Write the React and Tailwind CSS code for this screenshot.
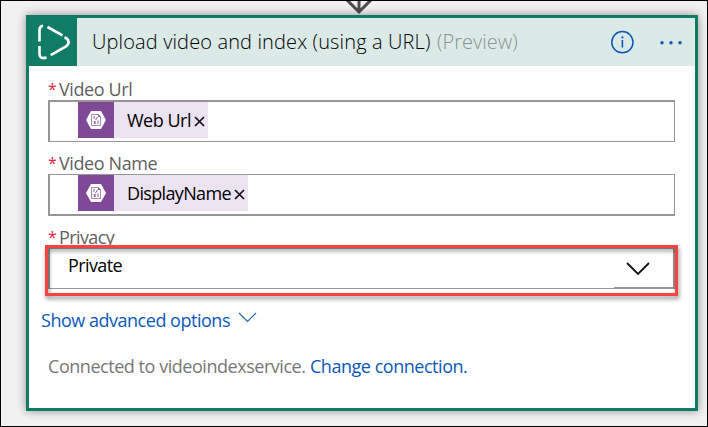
function Label({ children, className }) {
  return (
    <div className="flex h-[22px] items-center leading-[22px]">
      <span className="w-[11px] text-[16px]/[20px] text-[#e3263a]">*</span>
      <span className={`whitespace-nowrap text-[#5f5f5f] ${className}`}>{children}</span>
    </div>
  );
}

function Token({ children, className, textClass }) {
  return (
    <div className={`flex h-9 items-center bg-[#ece3f0] ${className}`}>
      <div className="flex h-9 w-9 shrink-0 items-center justify-center bg-[#804998]">
        <svg width="20" height="18" viewBox="0 0 20 18">
          <path d="M5 0H15L20 9L15 18H5L0 9Z" fill="#fff" />
          <path d="M5.5 3.5H12.5L14.5 5.5V14.5H5.5Z" fill="none" stroke="#a27bb3" strokeWidth="0.9" />
          <path d="M12 3.5V6H14.5Z" fill="#804998" />
          <path d="M8 5V8M11.5 6L9.5 9M8 10L9.5 13M9.5 10L8 13M12 9.5V13" fill="none" stroke="#804998" strokeWidth="0.9" />
        </svg>
      </div>
      <span className={`ml-[13px] whitespace-nowrap text-black ${textClass}`}>{children}</span>
      <svg className="mr-[3px] ml-auto mt-[3px] shrink-0" width="11" height="11" viewBox="0 0 11 11">
        <path d="M1 1L10 10M10 1L1 10" stroke="#111" strokeWidth="1.7" />
      </svg>
    </div>
  );
}

export default function App() {
  return (
    <div className="relative h-[427px] w-[708px] overflow-hidden border border-black bg-[#f1f1f1] pt-[14px] pl-[25px] font-['Open_Sans','Noto_Sans',sans-serif] text-[18px]">
      <svg className="absolute top-0 left-[343px]" width="30" height="14" viewBox="0 0 30 14">
        <path d="M15 0V11M1.5 -2.5L15 11L28.5 -2.5" fill="none" stroke="#4c4c4c" strokeWidth="3" />
      </svg>
      <div className="relative flex h-[396px] w-[672px] flex-col border-[3px] border-[#117c65] bg-white shadow-[0_0_9px_rgba(0,0,0,0.4)]">
        <div className="flex h-12 shrink-0 items-center bg-[#dceae7]">
          <div className="flex h-12 w-12 shrink-0 items-center justify-center bg-[#117c65]">
            <svg width="48" height="48" viewBox="29 18 48 48" fill="none" stroke="#fff" strokeWidth="2.6">
              <path d="M43 25.8C40.5 26.2 39.5 27.8 39.5 30V41.5" />
              <path d="M47.5 27L62.5 35.3" />
              <path d="M39.5 46V54C39.5 57.3 42 59 46.5 57.6" />
              <path d="M64.5 37.3C69.3 39.3 70 43.6 66 46.4L50.7 55.2" />
            </svg>
          </div>
          <span className="ml-[15px] w-[345px] whitespace-nowrap text-[20px] font-[350] tracking-[0.13px] text-black">
            Upload video and index (using a URL)
          </span>
          <span className="whitespace-nowrap text-[20px] font-[350] tracking-[0.02px] text-[#8b9291]">(Preview)</span>
          <svg className="ml-auto shrink-0" width="24" height="24" viewBox="0 0 24 24">
            <circle cx="12.4" cy="12.2" r="10.6" fill="none" stroke="#0b59b8" strokeWidth="1.5" />
            <path d="M12.4 10V17.5" stroke="#0b59b8" strokeWidth="1.6" />
            <circle cx="12.4" cy="7.4" r="1.1" fill="#0b59b8" />
          </svg>
          <svg className="mr-[12px] ml-[25px] shrink-0" width="24" height="6" viewBox="0 0 24 6" fill="#0b59b8">
            <circle cx="3" cy="3.8" r="1.7" />
            <circle cx="12" cy="3.8" r="1.7" />
            <circle cx="21" cy="3.8" r="1.7" />
          </svg>
        </div>

        <div className="flex flex-col pt-3 pl-[19px]">
          <Label className="tracking-[-0.4px]">Video Url</Label>
          <div className="h-[42px] w-[627px] border border-t-2 border-l-2 border-[#969696] pl-7">
            <Token className="w-[130px]" textClass="tracking-[-0.5px]">Web Url</Token>
          </div>
          <div className="h-[10px]" />
          <Label className="tracking-[-0.4px]">Video Name</Label>
          <div className="h-[42px] w-[627px] border border-b-2 border-l-2 border-[#969696] pl-7">
            <Token className="w-[170px]" textClass="tracking-[-0.65px]">DisplayName</Token>
          </div>
          <div className="h-[10px]" />
          <Label className="tracking-[-0.6px]">Privacy</Label>
          <div className="relative flex h-[41px] w-[627px] items-start border border-r-2 border-l-2 border-[#969696] pl-[18px]">
            <span className="mt-[5px] whitespace-nowrap leading-[22px] tracking-[-0.6px] text-black">Private</span>
            <div className="ml-auto flex h-[39px] w-[59px] justify-center border-b border-[#969696] pr-[11px]">
              <svg className="mt-[13px]" width="24" height="14" viewBox="0 0 24 14">
                <path d="M1 1L12 12L23 1" fill="none" stroke="#111" strokeWidth="1.8" />
              </svg>
            </div>
            <div className="absolute -top-1 -left-[5px] h-[51px] w-[633px] border-[3px] border-[#f94343] drop-shadow-[1px_3px_2px_rgba(0,0,0,0.45)]" />
          </div>
        </div>

        <div className="mt-5 flex h-[22px] items-center pl-3 text-[#0b59b8]">
          <span className="w-[197px] whitespace-nowrap leading-[22px] tracking-[-0.48px]">Show advanced options</span>
          <svg className="-mt-[5px]" width="19" height="11" viewBox="0 0 19 11">
            <path d="M1 1L9.5 9.5L18 1" fill="none" stroke="#2568ae" strokeWidth="1.2" />
          </svg>
        </div>
        <div className="mt-6 flex h-[22px] items-center pl-[19px] leading-[22px]">
          <span className="w-[262px] whitespace-nowrap tracking-[-0.46px] text-[#777]">Connected to videoindexservice.</span>
          <span className="whitespace-nowrap tracking-[-0.47px] text-[#0b59b8]">Change connection.</span>
        </div>
      </div>
    </div>
  );
}
